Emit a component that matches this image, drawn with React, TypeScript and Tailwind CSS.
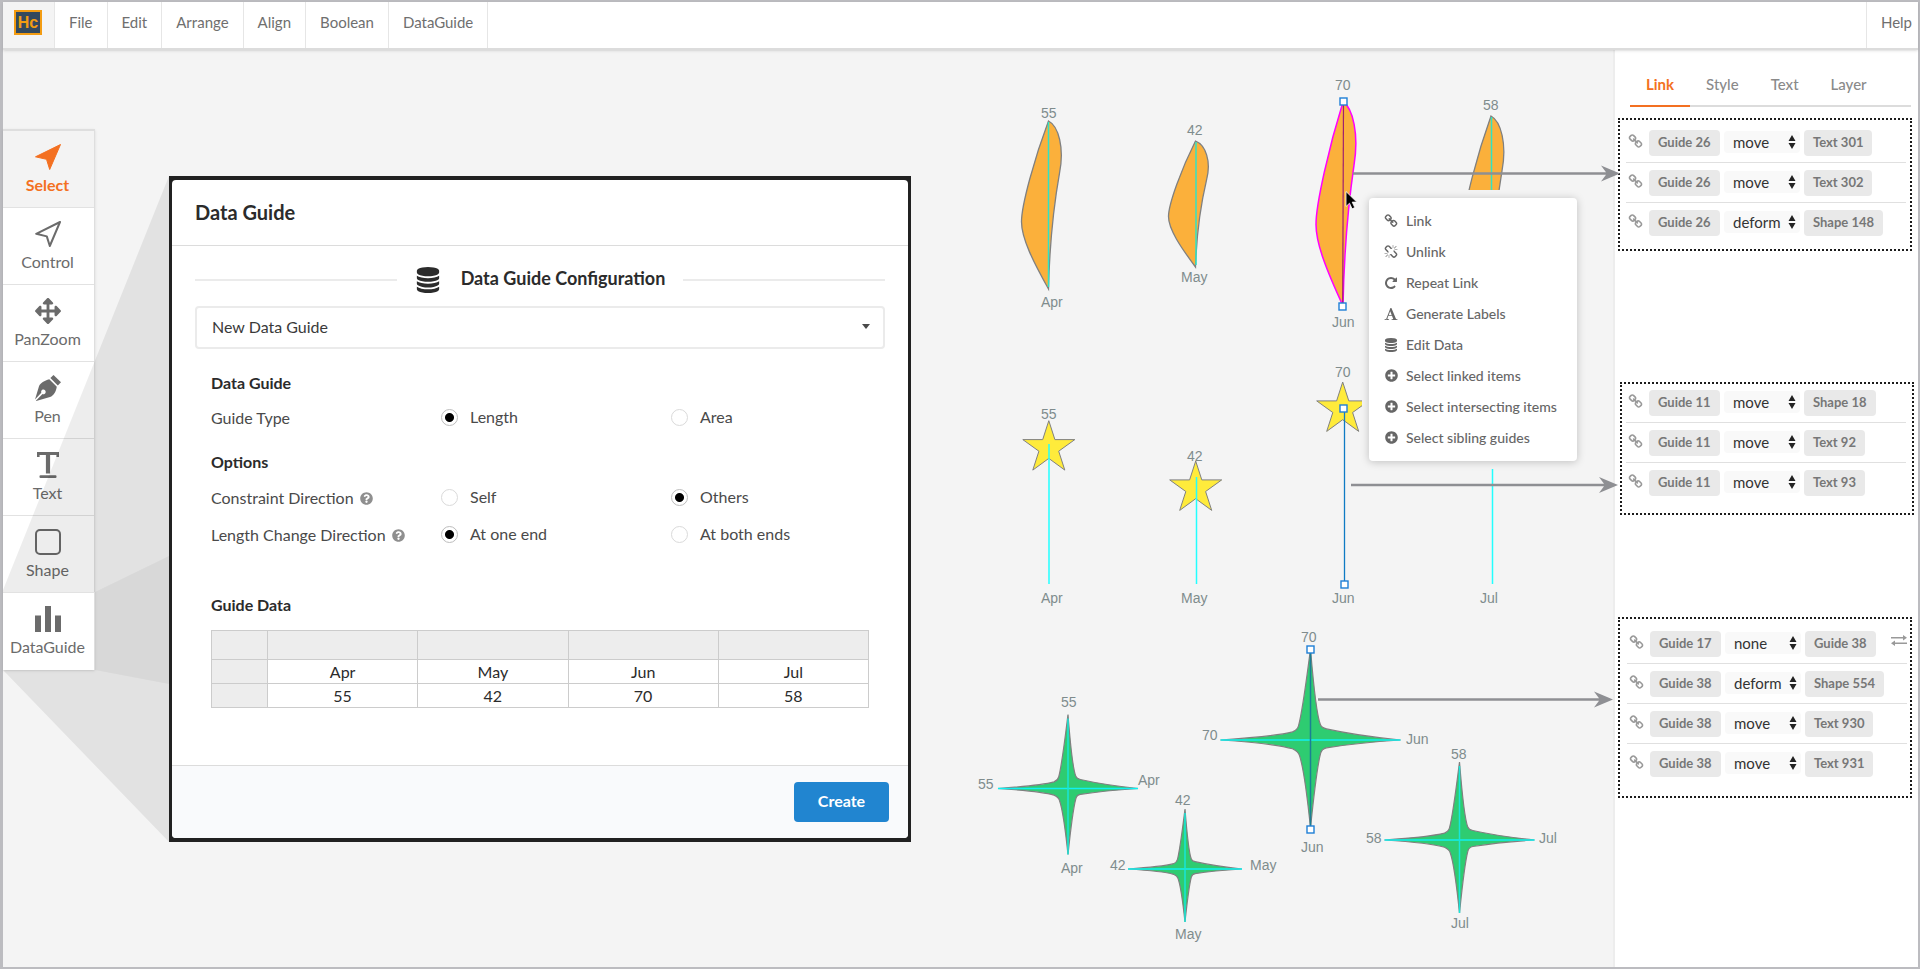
import type { ReactNode } from "react";
import { FaArrowsAlt, FaPlusCircle, FaQuestionCircle } from "react-icons/fa";

/* ---------- icons ---------- */

const GLYPHS = {
  link: "M1520 1216q0-40-28-68l-208-208q-28-28-68-28-42 0-72 32 3 3 19 18.500t21.500 21.500 15 19 13 25.500 3.500 27.500q0 40-28 68t-68 28q-15 0-27.500-3.500t-25.500-13-19-15-21.500-21.500-18.500-19q-33 31-33 73 0 40 28 68l206 207q27 27 68 27 40 0 68-26l147-146q28-28 28-67zm-703-705q0-40-28-68l-206-207q-28-28-68-28-39 0-68 27l-147 146q-28 28-28 67 0 40 28 68l208 208q27 27 68 27 42 0 72-31-3-3-19-18.500t-21.500-21.500-15-19-13-25.500-3.500-27.500q0-40 28-68t68-28q15 0 27.500 3.500t25.500 13 19 15 21.500 21.500 18.500 19q33-31 33-73zm895 705q0 120-85 203l-147 146q-83 83-203 83-121 0-204-85l-206-207q-83-83-83-203 0-123 88-209l-88-88q-86 88-208 88-120 0-204-84l-208-208q-84-84-84-204t85-203l147-146q83-83 203-83 121 0 204 85l206 207q83 83 83 203 0 123-88 209l88 88q86-88 208-88 120 0 204 84l208 208q84 84 84 204z",
  unlink:
    "M503 1271l-256 256q-10 9-23 9-12 0-23-9-9-10-9-23t9-23l256-256q10-9 23-9t23 9q9 10 9 23t-9 23zm169 41v320q0 14-9 23t-23 9-23-9-9-23v-320q0-14 9-23t23-9 23 9 9 23zm-224-224q0 14-9 23t-23 9h-320q-14 0-23-9t-9-23 9-23 23-9h320q14 0 23 9t9 23zm1264 128q0 120-85 203l-147 146q-83 83-203 83-121 0-204-85l-334-335q-21-21-42-56l239-18 273 274q28 28 68 27.500t68-27.500l147-146q28-28 28-67 0-40-28-68l-274-275 18-239q35 21 56 42l336 336q84 86 84 204zm-617-724l-239 18-273-274q-28-28-68-28-39 0-68 27l-147 146q-28 28-28 67 0 40 28 68l274 274-18 240q-35-21-56-42l-336-336q-84-86-84-204 0-120 85-203l147-146q83-83 203-83 121 0 204 85l334 335q21 21 42 56zm633 84q0 14-9 23t-23 9h-320q-14 0-23-9t-9-23 9-23 23-9h320q14 0 23 9t9 23zm-544-544v320q0 14-9 23t-23 9-23-9-9-23v-320q0-14 9-23t23-9 23 9 9 23zm407 151l-256 256q-11 9-23 9t-23-9q-9-10-9-23t9-23l256-256q10-9 23-9t23 9q9 10 9 23t-9 23z",
  repeat:
    "M1664 256v448q0 26-19 45t-45 19h-448q-42 0-59-40-17-39 14-69l138-138q-148-137-349-137-104 0-198.500 40.500t-163.500 109.500-109.500 163.500-40.500 198.500 40.500 198.500 109.500 163.500 163.500 109.500 198.500 40.500q119 0 225-52t179-147q7-10 23-12 14 0 25 9l137 138q9 8 9.500 20.500t-7.500 22.500q-109 132-264 204.500t-327 72.500q-156 0-298-61t-245-164-164-245-61-298 61-298 164-245 245-164 298-61q147 0 284.500 55.500t244.500 156.500l130-129q29-31 70-14 39 17 39 59z",
  font: "M789 559l-170 450q33 0 136.500 2t160.500 2q19 0 57-2-87-253-184-452zm-725 1105l2-79q23-7 56-12.500t57-10.500 49.500-14.500 44.500-29 31-50.500l237-616 280-724h128q8 14 11 21l205 480q33 78 106 257.500t114 274.500q15 34 58 144.500t72 168.500q20 45 35 57 19 15 88 29.500t84 20.500q6 38 6 57 0 4-.5 13t-.5 13q-63 0-190-8t-191-8q-76 0-215 7t-178 8q0-43 4-78l131-28q1 0 12.500-2.500t15.500-3.500 14.500-4.500 15-6.500 11-8 9-11 2.500-14q0-16-31-96.500t-72-177.500-42-100l-450-2q-26 58-76.500 195.500t-50.500 162.500q0 22 14 37.500t43.500 24.500 48.500 13.500 57 8.500 41 4q1 19 1 58 0 9-2 27-58 0-174.500-10t-174.500-10q-8 0-26.500 4t-21.500 4q-80 14-188 14z",
  database:
    "M896 768q237 0 443-43t325-127v170q0 69-103 128t-280 93.500-385 34.500-385-34.500-280-93.500-103-128v-170q119 84 325 127t443 43zm0 768q237 0 443-43t325-127v170q0 69-103 128t-280 93.500-385 34.500-385-34.500-280-93.500-103-128v-170q119 84 325 127t443 43zm0-384q237 0 443-43t325-127v170q0 69-103 128t-280 93.500-385 34.500-385-34.500-280-93.500-103-128v-170q119 84 325 127t443 43zm0-1152q208 0 385 34.500t280 93.500 103 128v128q0 69-103 128t-280 93.500-385 34.500-385-34.500-280-93.500-103-128v-128q0-69 103-128t280-93.500 385-34.500z",
};

function Glyph({ name, className }: { name: keyof typeof GLYPHS; className: string }) {
  return (
    <svg viewBox="0 0 1792 1792" className={className} fill="currentColor" aria-hidden="true">
      <path d={GLYPHS[name]} />
    </svg>
  );
}

function PointerIcon({ solid }: { solid?: boolean }) {
  return (
    <svg
      viewBox="0 0 26 26"
      className="size-[26px]"
      fill={solid ? "currentColor" : "none"}
      stroke="currentColor"
      strokeWidth={solid ? 1 : 2}
      strokeLinejoin="round"
      aria-hidden="true"
    >
      <path d={solid ? "M25.500.5.500 12.800l11 2.500 3.200 10.200z" : "M25 1 1.200 12.800l10.600 2.600L14.800 25z"} />
    </svg>
  );
}

function PenIcon() {
  return (
    <svg viewBox="0 0 26 26" className="size-[26px]" fill="currentColor" aria-hidden="true">
      <path d="M18.500 0 26 7.300l-3.200 3.200-7.400-7.400z" />
      <path
        fillRule="evenodd"
        d="M14.300 4.200l7.500 7.500c-1 5.300-3 8.800-6.800 10.300L1.200 26l-.3-.3 6.600-6.700a2.300 2.300 0 1 0-1.200-1.200L0 24.500 4 11.200C5.300 8 9.500 5.600 14.300 4.200z"
      />
    </svg>
  );
}

function TextIcon() {
  return (
    <svg viewBox="0 0 26 26" className="size-[26px]" fill="currentColor" aria-hidden="true">
      <path d="M2 0h22v5h-2.600V3h-6.300v18.500h-4.200V3H4.600v2H2z" />
      <rect x="4.500" y="23.300" width="17" height="2.700" rx="1" />
    </svg>
  );
}

function ShapeIcon() {
  return (
    <svg viewBox="0 0 26 26" className="size-[26px]" fill="none" stroke="currentColor" strokeWidth="2" aria-hidden="true">
      <rect x="1" y="1" width="24" height="24" rx="4" />
    </svg>
  );
}

function BarsIcon() {
  return (
    <svg viewBox="0 0 26 26" className="size-[26px]" fill="currentColor" aria-hidden="true">
      <rect x="0" y="9.500" width="6" height="16.500" />
      <rect x="10" y="0" width="6" height="26" />
      <rect x="20" y="9.500" width="6" height="16.500" />
    </svg>
  );
}

/* ---------- top bar ---------- */

const MENUS = ["File", "Edit", "Arrange", "Align", "Boolean", "DataGuide"];

function TopBar() {
  return (
    <header className="relative z-10 flex h-12 shrink-0 border-b-2 border-[#dcdcdc] bg-white text-[15px] text-[#6f6f6f] shadow-sm">
      <div className="w-[52px] border-r border-[#e6e6e6] bg-[#f4f4f4] pt-2 pl-[11px]">
        <div className="flex h-[25px] w-7 items-center justify-center border-2 border-[#f39c12] bg-[#34495e] font-[Liberation_Sans,sans-serif] text-base leading-5 font-bold text-[#f39c12]">
          Hc
        </div>
      </div>
      <nav className="flex flex-1">
        {MENUS.map((m) => (
          <button key={m} type="button" className="border-r border-[#e6e6e6] px-[14px] pb-[6px]">
            {m}
          </button>
        ))}
        <button type="button" className="ml-auto border-l border-[#e6e6e6] pr-[6px] pb-[6px] pl-[14px]">
          Help
        </button>
      </nav>
    </header>
  );
}

/* ---------- tool palette ---------- */

const TOOLS: { name: string; icon: ReactNode }[] = [
  { name: "Select", icon: <PointerIcon solid /> },
  { name: "Control", icon: <PointerIcon /> },
  { name: "PanZoom", icon: <FaArrowsAlt className="size-[26px]" /> },
  { name: "Pen", icon: <PenIcon /> },
  { name: "Text", icon: <TextIcon /> },
  { name: "Shape", icon: <ShapeIcon /> },
  { name: "DataGuide", icon: <BarsIcon /> },
];

function ToolPalette() {
  return (
    <div className="mt-[79px] flex w-[92px] shrink-0 flex-col border-t-2 border-r border-[#dedede] bg-white text-[#6b6b6b] shadow">
      {TOOLS.map((t, i) => (
        <button
          key={t.name}
          type="button"
          className={
            "flex h-[77px] flex-col items-center gap-[3px] border-b pt-[13px] pr-[2px] text-base " +
            (i === 0
              ? "border-[#e2e2e2] bg-[#f3f3f3] font-bold text-[#f37021]"
              : i === TOOLS.length - 1
                ? "border-transparent"
                : "border-[#e2e2e2]")
          }
        >
          {t.icon}
          {t.name}
        </button>
      ))}
    </div>
  );
}

function Callout() {
  return (
    <svg viewBox="3 50 169 800" className="pointer-events-none absolute top-0 left-0 h-[800px] w-[169px]" aria-hidden="true">
      <polygon points="3,590 169,176 169,842 3,670 95,670 95,592 3,592" fill="#000" fillOpacity="0.07" />
      <polygon points="95,592 169,556 169,684 95,670" fill="#000" fillOpacity="0.045" />
    </svg>
  );
}

/* ---------- data guide dialog ---------- */

type Choice = { label: string; checked: boolean };

function OptionRow({ label, help, name, choices }: { label: string; help?: boolean; name: string; choices: Choice[] }) {
  return (
    <div role="radiogroup" aria-label={label} className="flex h-6 items-center">
      <span className="flex w-[230px] shrink-0 items-center gap-[6px] pt-[2px]">
        {label}
        {help && <FaQuestionCircle className="size-[13px] text-[#8f8f8f]" />}
      </span>
      {choices.map((c, i) => (
        <label key={c.label} className={"flex items-center gap-3 " + (i === 0 ? "w-[230px] shrink-0" : "flex-1")}>
          <input
            type="radio"
            name={name}
            defaultChecked={c.checked}
            className="size-[17px] appearance-none rounded-full border border-[#dadada] bg-white checked:border-[#bdbdbd] checked:bg-[radial-gradient(circle,#000_4px,transparent_5px)]"
          />
          {c.label}
        </label>
      ))}
    </div>
  );
}

const DATA = [
  ["Apr", "May", "Jun", "Jul"],
  ["55", "42", "70", "58"],
];

function DataGuideDialog() {
  return (
    <section className="relative mt-[126px] ml-[74px] w-[742px] shrink-0 border-x-[3px] border-y-[4px] border-[#212121] bg-[#212121] text-base text-[#4a4a4a]">
      <div className="overflow-hidden rounded bg-white">
        <h2 className="border-b border-[#dcdcdc] px-[23px] pt-[18px] pb-[19px] text-xl leading-7 font-bold text-[#2b2b2b]">Data Guide</h2>
        <div className="px-[23px] pt-5">
          <div className="flex items-center">
            <span className="h-[2px] flex-1 bg-[#ebebeb]" />
            <h3 className="mx-[18px] flex items-center gap-5 text-lg leading-6 font-bold text-[#2b2b2b]">
              <Glyph name="database" className="size-[26px]" />
              <span className="pb-1">Data Guide Configuration</span>
            </h3>
            <span className="h-[2px] flex-1 bg-[#ebebeb]" />
          </div>
          <div className="relative mt-3">
            <select
              aria-label="Data guide"
              className="h-[43px] w-full appearance-none rounded border-2 border-[#ebebeb] bg-white px-[15px] pb-[2px] text-base text-[#3a3a3a]"
            >
              <option>New Data Guide</option>
            </select>
            <svg viewBox="0 0 8 5" className="pointer-events-none absolute top-[18px] right-[15px] h-[5px] w-2" aria-hidden="true">
              <path d="M0 0h8L4 5z" fill="#4a4a4a" />
            </svg>
          </div>
          <div className="px-4">
            <h4 className="mt-[22px] font-bold text-[#2b2b2b]">Data Guide</h4>
            <div className="mt-[10px]">
              <OptionRow
                label="Guide Type"
                name="type"
                choices={[
                  { label: "Length", checked: true },
                  { label: "Area", checked: false },
                ]}
              />
            </div>
            <h4 className="mt-[21px] font-bold text-[#2b2b2b]">Options</h4>
            <div className="mt-[11px] flex flex-col gap-[13px]">
              <OptionRow
                label="Constraint Direction"
                help
                name="constraint"
                choices={[
                  { label: "Self", checked: false },
                  { label: "Others", checked: true },
                ]}
              />
              <OptionRow
                label="Length Change Direction"
                help
                name="change"
                choices={[
                  { label: "At one end", checked: true },
                  { label: "At both ends", checked: false },
                ]}
              />
            </div>
            <h4 className="mt-[47px] font-bold text-[#2b2b2b]">Guide Data</h4>
            <table className="mt-[13px] mb-[57px] w-full table-fixed border-collapse text-center leading-[23px] text-[#2b2b2b]">
              <thead>
                <tr className="h-[29px] bg-[#ededed]">
                  <th className="w-[56px] border border-[#cccccc]" />
                  {DATA[0].map((m) => (
                    <th key={m} className="border border-[#cccccc]" />
                  ))}
                </tr>
              </thead>
              <tbody>
                {DATA.map((row, i) => (
                  <tr key={i}>
                    <th className="border border-[#cccccc] bg-[#ededed]" />
                    {row.map((v) => (
                      <td key={v} className="border border-[#cccccc] p-0">
                        {v}
                      </td>
                    ))}
                  </tr>
                ))}
              </tbody>
            </table>
          </div>
        </div>
        <div className="flex justify-end border-t border-[#dcdcdc] bg-[#f9fafc] py-4 pr-[19px]">
          <button type="button" className="h-10 w-[95px] rounded bg-[#2185d0] pb-[2px] text-base font-bold text-white">
            Create
          </button>
        </div>
      </div>
    </section>
  );
}

/* ---------- drawing on the canvas ---------- */

function leafPath(x: number, top: number, h: number) {
  const y = (f: number) => top + f * h;
  return (
    `M${x} ${top} C${x + 10} ${y(0.03)} ${x + 16} ${y(0.16)} ${x + 11} ${y(0.31)} ` +
    `C${x + 4.5} ${y(0.53)} ${x + 1} ${y(0.75)} ${x} ${y(1)} ` +
    `C${x - 15} ${y(0.84)} ${x - 27} ${y(0.7)} ${x - 27} ${y(0.6)} ` +
    `C${x - 27} ${y(0.5)} ${x - 14} ${y(0.22)} ${x} ${top}Z`
  );
}

function starPoints(cx: number, cy: number) {
  return Array.from({ length: 10 }, (_, i) => {
    const r = i % 2 ? 10.4 : 27.3;
    const a = -Math.PI / 2 + (i * Math.PI) / 5;
    return `${(cx + r * Math.cos(a)).toFixed(1)},${(cy + r * Math.sin(a)).toFixed(1)}`;
  }).join(" ");
}

function sparkPath(r: number, up: number, down: number) {
  const p = (x: number, y: number) => `${((x / 90) * r).toFixed(1)} ${((y / 90) * (y < 0 ? up : down)).toFixed(1)}`;
  return (
    `M${p(0, -90)} C${p(3, -54)} ${p(7, -22)} ${p(10, -15)} Q${p(11, -12)} ${p(16, -11)} ` +
    `C${p(34, -7)} ${p(60, -3)} ${p(90, 0)} C${p(60, 2)} ${p(34, 5)} ${p(16, 8)} Q${p(11, 9)} ${p(10, 14)} ` +
    `C${p(6, 30)} ${p(3, 60)} ${p(0, 90)} C${p(-3, 60)} ${p(-7, 28)} ${p(-11, 16)} Q${p(-12, 12)} ${p(-18, 9)} ` +
    `C${p(-34, 4)} ${p(-60, 2)} ${p(-90, 0)} C${p(-60, -2)} ${p(-34, -4)} ${p(-18, -8)} Q${p(-13, -10)} ${p(-12, -14)} ` +
    `C${p(-8, -28)} ${p(-4, -60)} ${p(0, -90)}Z`
  );
}

const SPARKS = [
  { x: 1068, y: 788.5, r: 70, up: 74, down: 66, blue: false },
  { x: 1185, y: 869, r: 57, up: 60, down: 53, blue: false },
  { x: 1310.5, y: 740, r: 90, up: 91, down: 88, blue: true },
  { x: 1459.5, y: 840, r: 75, up: 78, down: 73, blue: false },
];

const LABELS: [number, number, string][] = [
  [1041, 118, "55"], [1041, 307, "Apr"], [1187, 135, "42"], [1181, 282, "May"],
  [1335, 90, "70"], [1332, 327, "Jun"], [1483, 110, "58"],
  [1041, 419, "55"], [1187, 461, "42"], [1335, 377, "70"],
  [1041, 603, "Apr"], [1181, 603, "May"], [1332, 603, "Jun"], [1480, 603, "Jul"],
  [1061, 707, "55"], [978, 789, "55"], [1138, 785, "Apr"], [1061, 873, "Apr"],
  [1175, 805, "42"], [1110, 870, "42"], [1250, 870, "May"], [1175, 939, "May"],
  [1301, 642, "70"], [1202, 740, "70"], [1406, 744, "Jun"], [1301, 852, "Jun"],
  [1451, 759, "58"], [1366, 843, "58"], [1539, 843, "Jul"], [1451, 928, "Jul"],
];

const HANDLES: [number, number][] = [
  [1343.5, 101.5], [1342.5, 306.5], [1343.5, 408.5], [1344.5, 584.5], [1310.5, 649.5], [1310.5, 829.5],
];

const ARROWS: [number, number, number][] = [
  [1353, 1620, 173.5],
  [1351, 1618, 485],
  [1318, 1613, 699.5],
];

function Drawing() {
  return (
    <svg viewBox="3 50 1612 917" className="pointer-events-none absolute top-0 left-0 z-10 h-[917px] w-[1612px] overflow-visible">
      <g fill="#fbb03b" stroke="#808080" strokeWidth="1.3">
        <path d={leafPath(1048.5, 121, 168)} />
        <path d={leafPath(1195.5, 141, 126)} />
        <path d={leafPath(1491, 116, 177)} />
      </g>
      <path d={leafPath(1343, 102, 204)} fill="#fbb03b" stroke="#ff00ff" strokeWidth="1.5" />
      <path d="M1343.500 102L1342.700 306" stroke="#a0206e" strokeWidth="1.2" />
      <path d="M1048.500 122V287M1196 142V265M1491.500 117V192" stroke="#30e3c5" strokeWidth="1.5" />

      <g fill="#ffeb3b" stroke="#808080" strokeWidth="1">
        <polygon points={starPoints(1048.8, 448)} />
        <polygon points={starPoints(1195.7, 488.3)} />
        <polygon points={starPoints(1342.7, 409.3)} />
      </g>
      <path d="M1049 444V584M1196.500 477V584M1492.500 460V584" stroke="#22ffff" strokeWidth="1.5" />
      <path d="M1344.500 408V584" stroke="#0f7bc4" strokeWidth="1.3" />

      {SPARKS.map((s) => (
        <g key={s.x} transform={`translate(${s.x} ${s.y})`}>
          <path d={sparkPath(s.r, s.up, s.down)} fill="#2ecc71" stroke="#808080" strokeWidth="1.2" />
          <path d={`M${-s.r} 0H${s.r}`} stroke="#10f0f0" strokeWidth="1.5" />
          <path d={`M0 ${4 - s.up}V${s.down}`} stroke={s.blue ? "#1a7f94" : "#18e6d8"} strokeWidth="1.5" />
        </g>
      ))}

      <g fill="#fff" stroke="#1f7fd6" strokeWidth="1.4">
        {HANDLES.map(([x, y]) => (
          <rect key={`${x}-${y}`} x={x - 3.5} y={y - 3.5} width="7" height="7" />
        ))}
      </g>

      <g className="font-[Liberation_Sans,Arial,sans-serif] text-[14px]" fill="#7f8c8d">
        {LABELS.map(([x, y, t]) => (
          <text key={`${x}-${y}`} x={x} y={y}>
            {t}
          </text>
        ))}
      </g>

      <rect x="1362" y="190" width="223" height="279" fill="#f4f4f4" />

      <g fill="#8e8f93" stroke="none">
        {ARROWS.map(([x1, x2, y]) => (
          <path key={y} d={`M${x1} ${y - 1.2}H${x2 - 14}L${x2 - 19} ${y - 8}L${x2} ${y}L${x2 - 19} ${y + 8}L${x2 - 14} ${y + 1.2}H${x1}Z`} />
        ))}
      </g>

      <path d="M1346 191.500v15l3.500-3.300 2.600 5.600 2.700-1.200-2.600-5.500h4.600z" fill="#000" stroke="#fff" strokeWidth="0.8" />
    </svg>
  );
}

/* ---------- context menu ---------- */

const ACTIONS: { label: string; icon: ReactNode }[] = [
  { label: "Link", icon: <Glyph name="link" className="size-[14px]" /> },
  { label: "Unlink", icon: <Glyph name="unlink" className="size-[14px]" /> },
  { label: "Repeat Link", icon: <Glyph name="repeat" className="size-[14px]" /> },
  { label: "Generate Labels", icon: <Glyph name="font" className="size-[14px]" /> },
  { label: "Edit Data", icon: <Glyph name="database" className="size-[14px]" /> },
  { label: "Select linked items", icon: <FaPlusCircle className="size-[13px]" /> },
  { label: "Select intersecting items", icon: <FaPlusCircle className="size-[13px]" /> },
  { label: "Select sibling guides", icon: <FaPlusCircle className="size-[13px]" /> },
];

function ContextMenu() {
  return (
    <div
      role="menu"
      className="absolute top-[148px] left-[1366px] z-20 flex w-[208px] flex-col rounded bg-white pt-[7px] pb-2 text-[14px] leading-5 font-medium text-[#666] shadow-[0_1px_8px_rgba(0,0,0,0.22)]"
    >
      {ACTIONS.map((a) => (
        <button key={a.label} type="button" role="menuitem" className="flex h-[31px] items-center gap-2 pl-[15px] text-left">
          <span className="flex w-[14px] justify-center">{a.icon}</span>
          {a.label}
        </button>
      ))}
    </div>
  );
}

/* ---------- link panel ---------- */

type LinkRow = { from: string; mode: string; to: string; swap?: boolean };

const GROUPS: { box: string; rows: LinkRow[] }[] = [
  {
    box: "mt-[11px] ml-[3px] pt-[10px] pb-[13px] pl-[6px]",
    rows: [
      { from: "Guide 26", mode: "move", to: "Text 301" },
      { from: "Guide 26", mode: "move", to: "Text 302" },
      { from: "Guide 26", mode: "deform", to: "Shape 148" },
    ],
  },
  {
    box: "mt-[131px] ml-[5px] pt-[6px] pb-[17px] pl-[4px]",
    rows: [
      { from: "Guide 11", mode: "move", to: "Shape 18" },
      { from: "Guide 11", mode: "move", to: "Text 92" },
      { from: "Guide 11", mode: "move", to: "Text 93" },
    ],
  },
  {
    box: "mt-[102px] ml-[3px] pt-[12px] pb-[19px] pl-[7px]",
    rows: [
      { from: "Guide 17", mode: "none", to: "Guide 38", swap: true },
      { from: "Guide 38", mode: "deform", to: "Shape 554" },
      { from: "Guide 38", mode: "move", to: "Text 930" },
      { from: "Guide 38", mode: "move", to: "Text 931" },
    ],
  },
];

function Pill({ children }: { children: ReactNode }) {
  return <span className="flex h-[26px] items-center rounded bg-[#e9e9e9] px-[9px] text-[13px] font-bold text-[#777]">{children}</span>;
}

function LinkPanel() {
  return (
    <aside className="flex w-[303px] shrink-0 flex-col bg-white shadow-[-2px_0_0_#ededed]">
      <div role="tablist" className="mt-[18px] mr-[7px] ml-[15px] flex border-b-2 border-[#dcdcdc] text-[15px] text-[#8a8a8a]">
        {["Link", "Style", "Text", "Layer"].map((t, i) => (
          <button
            key={t}
            type="button"
            role="tab"
            aria-selected={i === 0}
            className={"-mb-[2px] h-[39px] border-b-2 px-4 pb-[5px] " + (i === 0 ? "border-[#f37021] font-bold text-[#f37021]" : "border-transparent font-medium")}
          >
            {t}
          </button>
        ))}
      </div>
      {GROUPS.map((g) => (
        <ul key={g.box} className={"w-[294px] border-2 border-dotted border-[#1c1c1c] " + g.box}>
          {g.rows.map((r, i) => (
            <li key={r.to} className={"flex w-[280px] items-start " + (i < g.rows.length - 1 ? "mb-[7px] border-b border-[#e0e0e0] pb-[6px]" : "")}>
              <Glyph name="link" className="mt-1 ml-[2px] size-[15px] text-[#999]" />
              <span className="ml-[6px] w-[75px]">
                <span className="flex">
                  <Pill>{r.from}</Pill>
                </span>
              </span>
              <span className="relative mt-px mr-1 flex">
                <select
                  aria-label={`${r.from} to ${r.to}`}
                  defaultValue={r.mode}
                  className="h-[22px] w-[76px] appearance-none rounded bg-[#f9f9f9] pl-[9px] text-[15px] leading-5 text-[#333]"
                >
                  <option>none</option>
                  <option>move</option>
                  <option>deform</option>
                </select>
                <svg viewBox="0 0 8 14" className="pointer-events-none absolute top-1 right-1 h-[14px] w-2" fill="#222" aria-hidden="true">
                  <path d="M4 0l3.500 6h-7zM4 14l3.500-6h-7z" />
                </svg>
              </span>
              <Pill>{r.to}</Pill>
              {r.swap && (
                <svg viewBox="0 0 16 11" className="mt-1 ml-auto h-[11px] w-4" fill="#999" aria-hidden="true">
                  <path d="M0 2h12V0l4 2.800-4 2.700V3.600H0zM16 7.400H4V5.500L0 8.300 4 11V9H16z" />
                </svg>
              )}
            </li>
          ))}
        </ul>
      ))}
    </aside>
  );
}

export default function App() {
  return (
    <div className="flex min-h-screen flex-col border-t-2 border-r-2 border-b-2 border-l-[3px] border-[#bcbcc0] bg-[#f4f4f4] font-[Lato,sans-serif]">
      <TopBar />
      <div className="flex flex-1">
        <main className="relative flex flex-1 items-start">
          <ToolPalette />
          <Callout />
          <DataGuideDialog />
          <Drawing />
          <ContextMenu />
        </main>
        <LinkPanel />
      </div>
    </div>
  );
}
